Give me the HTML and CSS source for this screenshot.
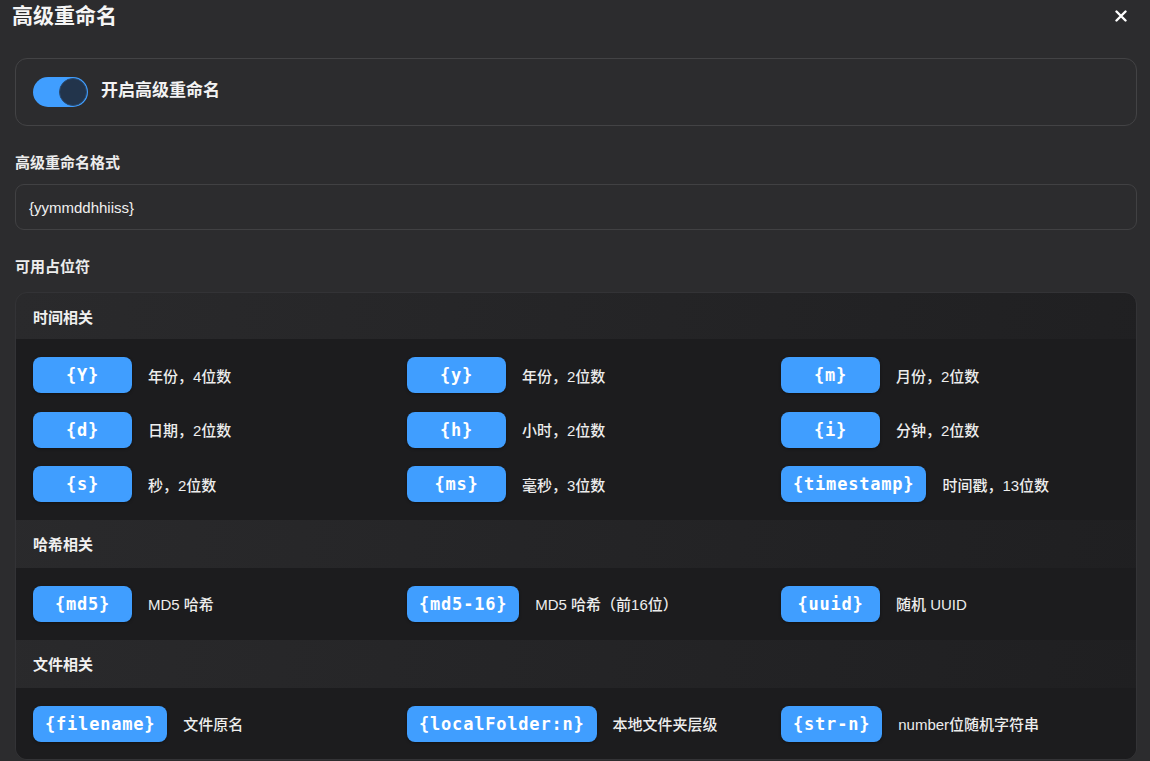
FILE: index.html
```html
<!DOCTYPE html>
<html lang="zh">
<head>
<meta charset="utf-8">
<title>高级重命名</title>
<link rel="stylesheet" href="styles.css">
</head>
<body>
<div class="dialog">
  <header class="dlg-head">
    <h1 class="dlg-title">高级重命名</h1>
    <button class="close" aria-label="关闭">
      <svg width="12" height="12" viewBox="0 0 12 12"><path d="M1.5 1.5L10.5 10.5M10.5 1.5L1.5 10.5" stroke="#fff" stroke-width="2.4" stroke-linecap="round"/></svg>
    </button>
  </header>

  <div class="switch-card">
    <span class="switch"><span class="knob"></span></span>
    <span class="switch-label">开启高级重命名</span>
  </div>

  <div class="field-label">高级重命名格式</div>
  <div class="input">{yymmddhhiiss}</div>

  <div class="field-label second">可用占位符</div>

  <div class="panel">
    <div class="sec-head first">时间相关</div>
    <div class="sec-body time">
      <div class="item"><span class="chip">{Y}</span><span class="desc">年份，4位数</span></div>
      <div class="item"><span class="chip">{y}</span><span class="desc">年份，2位数</span></div>
      <div class="item"><span class="chip">{m}</span><span class="desc">月份，2位数</span></div>
      <div class="item"><span class="chip">{d}</span><span class="desc">日期，2位数</span></div>
      <div class="item"><span class="chip">{h}</span><span class="desc">小时，2位数</span></div>
      <div class="item"><span class="chip">{i}</span><span class="desc">分钟，2位数</span></div>
      <div class="item"><span class="chip">{s}</span><span class="desc">秒，2位数</span></div>
      <div class="item"><span class="chip">{ms}</span><span class="desc">毫秒，3位数</span></div>
      <div class="item"><span class="chip">{timestamp}</span><span class="desc">时间戳，13位数</span></div>
    </div>
    <div class="sec-head">哈希相关</div>
    <div class="sec-body">
      <div class="item"><span class="chip">{md5}</span><span class="desc">MD5 哈希</span></div>
      <div class="item"><span class="chip">{md5-16}</span><span class="desc">MD5 哈希（前16位）</span></div>
      <div class="item"><span class="chip">{uuid}</span><span class="desc">随机 UUID</span></div>
    </div>
    <div class="sec-head">文件相关</div>
    <div class="sec-body last">
      <div class="item"><span class="chip">{filename}</span><span class="desc">文件原名</span></div>
      <div class="item"><span class="chip">{localFolder:n}</span><span class="desc">本地文件夹层级</span></div>
      <div class="item"><span class="chip">{str-n}</span><span class="desc">number位随机字符串</span></div>
    </div>
  </div>
</div>
</body>
</html>
```
FILE: styles.css
```css
html, body {
  margin: 0;
  padding: 0;
  background: #2c2c2e;
  height: 100%;
  overflow: hidden;
}
body {
  font-family: "Liberation Sans", "Noto Sans CJK SC", sans-serif;
  color: #f2f2f2;
}
.dialog {
  padding: 0 13px 0 15px;
}
.dlg-head {
  display: flex;
  align-items: center;
  justify-content: space-between;
  height: 32px;
  margin-left: -3px;
}
.dlg-title {
  margin: 0;
  font-size: 21px;
  font-weight: 700;
  line-height: 32px;
  color: #f5f5f5;
}
.close {
  background: none;
  border: 0;
  padding: 0;
  margin-right: 10px;
  width: 12px;
  height: 12px;
  display: flex;
}
.switch-card {
  margin-top: 26px;
  height: 66px;
  border: 1px solid #434345;
  border-radius: 12px;
  display: flex;
  align-items: center;
  padding-left: 17px;
  gap: 13px;
}
.switch {
  width: 55px;
  height: 30px;
  border-radius: 15px;
  background: #409eff;
  display: flex;
  align-items: center;
  justify-content: flex-end;
  padding-right: 1px;
  box-sizing: border-box;
}
.knob {
  width: 26px;
  height: 26px;
  border-radius: 50%;
  background: #22344b;
  border: 1px solid #2a4a70;
}
.switch-label {
  font-size: 17px;
  font-weight: 700;
  color: #f3f3f3;
  line-height: 24px;
  margin-top: -2px;
}
.field-label {
  margin-top: 26px;
  font-size: 15px;
  font-weight: 700;
  line-height: 22px;
  color: #ececec;
}
.field-label.second {
  margin-top: 26px;
}
.input {
  margin-top: 10px;
  height: 44px;
  border: 1px solid #414143;
  border-radius: 9px;
  padding-left: 13px;
  display: flex;
  align-items: center;
  font-size: 15px;
  color: #f0f0f0;
}
.panel {
  margin-top: 14px;
  border: 1px solid #333336;
  border-radius: 12px;
  overflow: hidden;
  background: linear-gradient(100deg, #2a2a2c 0%, #1f1f21 100%);
}
.sec-head {
  height: 48px;
  display: flex;
  align-items: center;
  padding-left: 17px;
  font-size: 15px;
  font-weight: 700;
  color: #f0f0f0;
}
.sec-head.first {
  height: 46px;
}
.sec-body {
  background: #1c1c1e;
  display: grid;
  grid-template-columns: repeat(3, 1fr);
  column-gap: 36px;
  row-gap: 18.5px;
  padding: 18px 17px 18px 17px;
}
.sec-body.time {
  padding-bottom: 17.5px;
}
.sec-body.last {
  padding-bottom: 17px;
}
.item {
  display: flex;
  align-items: center;
  gap: 16px;
  min-width: 0;
}
.chip {
  box-sizing: border-box;
  min-width: 99px;
  height: 36px;
  padding: 0 12px;
  border-radius: 8px;
  background: #409eff;
  color: #fff;
  display: flex;
  align-items: center;
  justify-content: center;
  font-family: "DejaVu Sans Mono", "Liberation Mono", monospace;
  font-weight: 700;
  font-size: 17px;
  letter-spacing: 0.8px;
  white-space: nowrap;
  box-shadow: 0 1px 3px rgba(0,0,0,0.35);
}
.desc {
  font-size: 15px;
  font-weight: 500;
  color: #ededed;
  white-space: nowrap;
}
```
